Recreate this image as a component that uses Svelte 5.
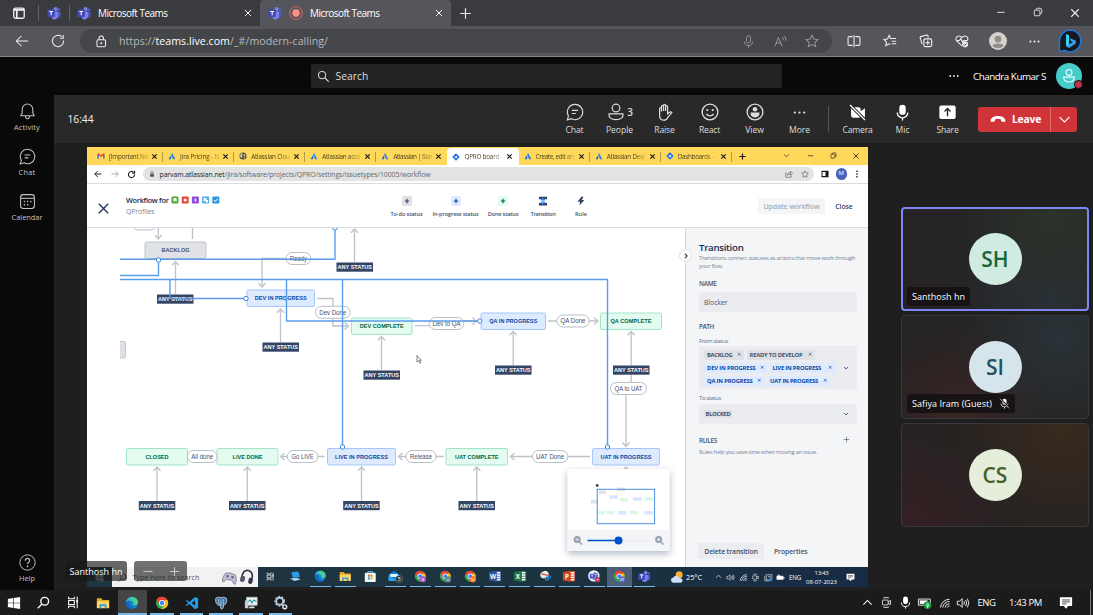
<script>
  function fit(node, width) {
    const natural = node.getBoundingClientRect().width;
    const count = node.textContent.length;
    if (width && count) {
      node.style.letterSpacing = (width - natural) / count + 'px';
    }
  }

  const teamsLogo = `<circle cx="9.8" cy="3.4" r="2.4" fill="#7b83eb"/><circle cx="13.6" cy="4.2" r="1.6" fill="#5059c9"/><path d="M11 6.5h4.5v4.2a2.6 2.6 0 0 1-4.5 1.8z" fill="#5059c9"/><path d="M5.5 6.3h7v5a4 4 0 0 1-7 2.8z" fill="#7b83eb"/><rect x="0.5" y="4" width="8.5" height="8.5" rx="1" fill="#4349b8"/><path d="M2.6 6.2h4.3M4.75 6.2v4.5" stroke="#fff" stroke-width="1.2"/>`;
  const chromeLogo = `<circle cx="8" cy="8" r="7" fill="#34a853"/><path d="M8 8 1.9 4.5A7 7 0 0 1 14.1 4.5z" fill="#ea4335"/><path d="M8 1a7 7 0 0 0-6.1 3.5L5.2 10 8 5z" fill="#ea4335"/><path d="M14.1 4.5A7 7 0 0 1 7.6 15L11 9V4.5z" fill="#fbbc05"/><circle cx="8" cy="8" r="3.5" fill="#fff"/><circle cx="8" cy="8" r="2.6" fill="#4285f4"/>`;
  const edgeLogo = `<circle cx="8" cy="8" r="7" fill="#1683d8"/><path d="M1.2 7C2 3 5 1 8.3 1 12.5 1 15 4 15 7c0 2.4-1.8 3.5-3.6 3.5-1.5 0-2.4-.5-2-1.2C10.200 7.500 8.500 5.500 6 5.500 3.800 5.500 2 6.200 1.200 7z" fill="#45cf93"/><path d="M1.200 7C2 3 5 1 8.300 1c-3 1-2 3.500-2.300 4.500C3.800 5.500 2 6.200 1.200 7z" fill="#2fb5dd"/><path d="M6 5.500C3.800 8 5.500 12.500 11 13.800 8 15.800 4 15 2.200 12 .8 9.700.7 8 1.200 7 2.400 5.600 4.500 5.300 6 5.500z" fill="#1068bd"/>`;
  const folder = `<path d="M1 2.500h5l1.500 2H15v9H1z" fill="#e9a820"/><path d="M1 6h14v8H1z" fill="#ffd766"/><path d="M4 14v-4.500h8V14h-2v-2.500H6V14z" fill="#3d9be0"/>`;
  const atlas = `<path d="M5.200 7C3.800 9.500 2.500 12 1.300 14.500h4.300C7 11.500 6.800 9 5.200 7z" fill="#1868db"/><path d="M8 1.300C6 4.800 6.600 7 7.800 9.500l2.500 5h4.300z" fill="#2680f5"/>`;
  const jira = `<path d="M8 .5 15.500 8 8 15.500.5 8z" fill="#2474e8"/><path d="M8 5.200 10.800 8 8 10.800 5.200 8z" fill="#fff"/><path d="M8 .5v4.700L5 8" fill="#0b56c4"/>`;
  const office = (c, l) => `<rect x="7" y="2" width="8" height="12" fill="#fff" stroke="${c}"/><path d="M9 5h5M9 8h5M9 11h5" stroke="${c}"/><path d="M0 2.500 10 1v14L0 13.500z" fill="${c}"/><text x="5" y="11" font-family="Open Sans, sans-serif" font-weight="700" font-size="8" text-anchor="middle" fill="#fff">${l}</text>`;
  const badge = (c, l) => chromeLogo + `<circle cx="11.500" cy="12" r="3.900" fill="${c}"/><text x="11.500" y="14" text-anchor="middle" font-size="5.500" font-family="Open Sans, sans-serif" fill="#fff">${l}</text>`;
  const S = 'fill="none" stroke="currentColor"';
  const meet = `<rect x="3" y="5" width="7" height="6" rx="1" ${S}/><path d="m10 7 3-1.500v5L10 9M4 2.500q3.500-1.500 7 0M4 13.500q3.500 1.500 7 0" ${S}/>`;
  const wifi = `<path d="M2 14A12 12 0 0 1 14 3M5 14a9 9 0 0 1 9-8M8 14a6 6 0 0 1 6-5M11 14a3 3 0 0 1 3-2" ${S} stroke-width="1.200"/>`;
  const speaker = `<path d="M1.500 6h2.500l3-3v10l-3-3H1.500z" ${S}/><path d="M9 6q1.200 2 0 4M11 4.500q2.200 3.500 0 7M13 3q3.300 5 0 10" ${S}/>`;

  const icons = {
    teams: teamsLogo, chrome: chromeLogo, edge: edgeLogo, folder, atlas, jira, meet, wifi, speaker,
    panel: `<rect x="2" y="2.500" width="12" height="11.500" rx="2" ${S} stroke-width="1.500"/><path d="M2 4.500h12M5.500 5v9" ${S} stroke-width="2"/>`,
    x: `<path d="m3 3 10 10M13 3 3 13" ${S} stroke-width="1.500"/>`,
    xBold: `<path d="m3 3 10 10M13 3 3 13" ${S} stroke-width="2.400"/>`,
    plus: `<path d="M8 1.500v13M1.500 8h13" ${S} stroke-width="1.400"/>`,
    plusBold: `<path d="M8 1v14M1 8h14" ${S} stroke-width="2.600"/>`,
    rec: `<circle cx="8" cy="8" r="7.200" fill="none" stroke="#f0645f"/><circle cx="8" cy="8" r="4.200" fill="#ff8f88"/>`,
    min: `<path d="M2 8.500h12" ${S} stroke-width="1.400"/>`,
    restore: `<rect x="2" y="5" width="9" height="9" rx="1.500" ${S} stroke-width="1.400"/><path d="M5 4.500Q5 2 7 2h4q3 0 3 3v4q0 2-2.500 2" ${S} stroke-width="1.400"/>`,
    back: `<path d="M15 8H1.500M7.500 2l-6 6 6 6" ${S} stroke-width="1.200"/>`,
    backBold: `<path d="M15 8H1.500M7.500 2l-6 6 6 6" ${S} stroke-width="2"/>`,
    fwd: `<path d="M1 8h13.500M9 2.500 14.500 8 9 13.500" ${S} stroke-width="1.600"/>`,
    reload: `<path d="M14.500 7.500A6.500 6.500 0 1 1 12.200 3M14 1v3.800h-3.800" ${S} stroke-width="1.200"/>`,
    reloadBold: `<path d="M13.500 8A5.500 5.500 0 1 1 11.500 3.800M13.500 1.500v4h-4" ${S} stroke-width="2"/>`,
    lock: `<rect x="2.500" y="6" width="11" height="9" rx="1.500" ${S} stroke-width="1.300"/><path d="M5.200 6V4a2.800 2.800 0 0 1 5.600 0v2" ${S} stroke-width="1.300"/><circle cx="8" cy="10.500" r="1.200" fill="currentColor"/>`,
    lockFill: `<rect x="3" y="7" width="10" height="8" rx="1" fill="currentColor"/><path d="M5 7V4.500a3 3 0 0 1 6 0V7" ${S} stroke-width="1.800"/>`,
    mic: `<rect x="5.500" y="1" width="5" height="9" rx="2.500" ${S} stroke-width="1.200"/><path d="M3 8a5 5 0 0 0 10 0M8 13v2.500" ${S} stroke-width="1.200"/>`,
    read: `<path d="M1 14 5.500 3 10 14M2.700 10h5.600M10 2.500q2 1.500 1.500 4M12.300 1q3 2 2.200 6" ${S} stroke-width="1.200"/>`,
    star: `<path d="m8 1.500 2 4.300 4.700.6-3.400 3.300.9 4.700L8 12.100l-4.200 2.300.9-4.700L1.300 6.400 6 5.800z" ${S} stroke-width="1.200"/>`,
    split: `<path d="M6.500 3H2.500Q1.200 3 1.200 4.300v7.400Q1.200 13 2.500 13h4M9.500 3h4q1.300 0 1.300 1.300v7.400q0 1.300-1.300 1.300h-4M8 1v14" ${S} stroke-width="1.200"/>`,
    fav: `<path d="M8.500 12 7 11.300l-3.800 2.200.8-4.200L1 6.200l4.200-.6L7 1.500l1.700 3.700H15M10 8.200h5M10 11.200h5" ${S} stroke-width="1.200"/>`,
    collect: `<rect x="5.500" y="5.500" width="9" height="9" rx="1.800" ${S} stroke-width="1.300"/><path d="M10 7.500v5M7.500 10h5M3.500 11.500 1.300 4.300q-.3-1 .7-1.300l6.800-1.800q1-.2 1.300.8l.6 2" ${S} stroke-width="1.200"/>`,
    heart: `<path d="M8 13.500 2 8C0 5.500 1.300 2.500 4.200 2.200 6 2 7.200 3 8 4.200 8.800 3 10 2 11.800 2.200c2.900.3 3.700 3.300 2.200 5.300M1.500 7.500H5l1.500-2 2 3.500 1.500-1.500h4" ${S} stroke-width="1.200"/><circle cx="11.500" cy="11.800" r="3.500" fill="#eee"/><path d="m9.800 11.800 1.300 1.300 2.200-2.500" fill="none" stroke="#444"/>`,
    avatar: `<circle cx="8" cy="8" r="8" fill="#d6d2cf"/><circle cx="8" cy="6.300" r="3" fill="#938c87"/><path d="M3 12.500Q3.200 10.200 8 10.200t5 2.300Q8 16.500 3 12.500z" fill="#938c87"/>`,
    dots: `<circle cx="3" cy="8" r="1.200" fill="currentColor"/><circle cx="8" cy="8" r="1.200" fill="currentColor"/><circle cx="13" cy="8" r="1.200" fill="currentColor"/>`,
    bing: `<path d="M8 .8A7.200 7.200 0 1 1 4.500 14.300L1 15V8A7.200 7.200 0 0 1 8 .8z" fill="#17191f" stroke="#1b78e8" stroke-width=".9"/><path d="M5.500 3.500 7.300 4.200v6L10 8.800 8.500 8l-.7-1.800 4 1.500v2L7.300 12.700 5.500 11.500z" fill="#3ba1f7"/><path d="m5.500 3.500 1.800.7v6l-1.800 1.300z" fill="#2ce0f2"/>`,
    search: `<circle cx="6.500" cy="6.500" r="4.800" ${S} stroke-width="1.200"/><path d="m10 10 5 5" ${S} stroke-width="1.300"/>`,
    searchBold: `<circle cx="9.500" cy="6.500" r="4.800" ${S} stroke-width="1.700"/><path d="m6 10-5 5" ${S} stroke-width="1.700"/>`,
    person: `<circle cx="8" cy="8" r="8" fill="#46cdc9"/><circle cx="8" cy="5.800" r="1.800" fill="none" stroke="#e8ffff" stroke-width=".7"/><path d="M4.700 8.700h6.600v.6q-.7 2.400-3.300 2.400T4.700 9.300z" fill="none" stroke="#e8ffff" stroke-width=".7"/>`,
    bell: `<path d="M8 1a5 5 0 0 1 5 5v3.500l1.300 2.500H1.700L3 9.500V6a5 5 0 0 1 5-5zM6 12.500q.3 2.300 2 2.300t2-2.300" ${S}/>`,
    chat: `<path d="M8 1.200a6.800 6.800 0 1 1-3.300 12.700L1.200 15l1-3.500A6.800 6.800 0 0 1 8 1.200zM5.300 6.500h5.400M5.300 9.300h3.500" ${S}/>`,
    calendar: `<rect x="1.500" y="1.500" width="13" height="13" rx="2.500" ${S}/><path d="M1.500 5h13" ${S}/><path d="M4.500 8h1.200M7.500 8h1.200M10.500 8h1.200M4.500 11h1.200M7.500 11h1.200" ${S} stroke-width="1.400"/>`,
    help: `<circle cx="8" cy="8" r="7.200" ${S} stroke-width=".9"/><path d="M5.900 6.300q.1-2.200 2.100-2.200t2.100 2q0 1.200-1.200 1.900-.9.600-.9 1.600" ${S}/><circle cx="8" cy="11.700" r=".8" fill="currentColor"/>`,
    people: `<circle cx="8" cy="4.500" r="3.400" ${S} stroke-width="1.100"/><path d="M1.800 9.700h12.400q.5 5-6.200 5t-6.200-5z" ${S} stroke-width="1.100"/>`,
    hand: `<path d="M3.200 9V5q0-1 .8-1t.9 1V7.500V3q0-1 .9-1t.9 1V7V2.300q0-1 .9-1t.9 1V7V3.200q0-.9.900-.9t.9.900v6.300l2-1.400q1.100-.6 1.800.4l-3.600 4.300Q9.300 15.300 7.200 15.300q-4 0-4-4.300z" ${S} stroke-width="1.100"/>`,
    smile: `<circle cx="8" cy="8" r="7" ${S} stroke-width="1.200"/><circle cx="5.600" cy="6.300" r="1" fill="currentColor"/><circle cx="10.400" cy="6.300" r="1" fill="currentColor"/><path d="M4.700 9.800q3.300 3.300 6.600 0" ${S} stroke-width="1.200"/>`,
    view: `<circle cx="8" cy="8" r="7" ${S} stroke-width="1.200"/><circle cx="8" cy="5.500" r="2" fill="currentColor"/><path d="M4 8.500h8q0 4.300-4 4.300t-4-4.300z" fill="currentColor"/>`,
    camera: `<path d="M2 3h7q2 0 2 2v1.800l4-2.800v9l-4-2.800V11q0 2-2 2H4q-2 0-2-2z" fill="currentColor"/><path d="m1 1 14 14" stroke="#292929" stroke-width="3"/><path d="m1 1 14 14" ${S} stroke-width="1.200"/>`,
    micFill: `<rect x="5" y=".7" width="6" height="9.500" rx="3" fill="currentColor"/><path d="M3 8a5 5 0 0 0 10 0M8 13v2.500" ${S} stroke-width="1.200"/>`,
    micOff: `<rect x="5" y="1" width="6" height="9" rx="3" fill="currentColor"/><path d="M3 8a5 5 0 0 0 10 0M8 13v2.500" ${S}/><path d="m2 1 13 14" stroke="#171010" stroke-width="2.500"/><path d="m1.500 1 13 14" ${S}/>`,
    share: `<rect x=".3" y="1.500" width="15.400" height="12.500" rx="1.800" fill="currentColor"/><path d="M8 11.500V4.500M5.200 7 8 4.300 10.800 7" fill="none" stroke="#292929" stroke-width="1.300"/>`,
    phone: `<path d="M.6 9.200C1.500 3.500 14.500 3.500 15.400 9.200q.2 2-1.300 1.800l-2.400-.6Q10.800 10 10.800 8.300 8 7.200 5.200 8.300q0 1.700-.9 2.100L1.900 11Q.4 11.200.6 9.200z" fill="currentColor"/>`,
    down: `<path d="m2 5 6 6 6-6" ${S} stroke-width="1.400"/>`,
    downBold: `<path d="m3 5.500 5 5 5-5" ${S} stroke-width="2.600"/>`,
    up: `<path d="m2 11 6-6 6 6" ${S} stroke-width="1.500"/>`,
    gmail: `<path d="M1 3v10h3V7l4 3 4-3v6h3V3l-2-.5L8 6.500 3 2.500z" fill="#ea4335"/><path d="M1 5v8h3V7z" fill="#4285f4"/><path d="M15 5v8h-3V7z" fill="#34a853"/>`,
    globe: `<circle cx="8" cy="8" r="7" fill="#4a4b4d"/><path d="M4 3q4-.5 4 2L5 7l2 2-1 3-4-3zM10 4l3 2-1 3-3-1zM9 11l3-1-2 4z" fill="#f6dc85"/>`,
    shareUp: `<path d="M4 6H1.500v8.500h11V11M4.500 10.500Q5 5.500 11 5.500V2.500l4 4-4 4V8Q7 7.500 4.500 10.500z" ${S} stroke-width="1.200"/>`,
    sidebar: `<path d="M1 1.500h14v13H1z" fill="#171717"/><path d="M3 4h6v8H3z" fill="#fff"/>`,
    kebab: `<circle cx="8" cy="2.500" r="1.700" fill="currentColor"/><circle cx="8" cy="8" r="1.700" fill="currentColor"/><circle cx="8" cy="13.500" r="1.700" fill="currentColor"/>`,
    addGrey: `<rect width="16" height="16" rx="2" fill="#dfe1e6"/><path d="M8 4.500v7M4.500 8h7" stroke="#344563" stroke-width="1.900"/>`,
    addBlue: `<rect width="16" height="16" rx="2" fill="#deebff"/><path d="M8 4.500v7M4.500 8h7" stroke="#0747a6" stroke-width="1.900"/>`,
    addGreen: `<rect width="16" height="16" rx="2" fill="#e3fcef"/><path d="M8 4.500v7M4.500 8h7" stroke="#006644" stroke-width="1.900"/>`,
    transition: `<path d="M1.500 1h13v4h-13zM1.500 11h13v4h-13z" fill="#344563"/><path d="M8 4v8M4.500 7 8 4l3.500 3M4.500 10 8 12.500l3.500-2.500" fill="none" stroke="#2684ff" stroke-width="1.800"/>`,
    bolt: `<path d="M8.500 1 2.500 9h4L5.500 15 13.500 6.500H9.300L12 1z" fill="#344563"/>`,
    win: `<path d="M1 3.300 7 2.400v5.200H1zM7.700 2.300 15 1.200v6.400H7.700zM1 8.300h6v5.300l-6-.9zM7.700 8.300H15v6.500l-7.300-1.100z" fill="currentColor"/>`,
    task: `<path d="M2 1v2.500h7V1M2 15v-2.500h7V15M2 5.500h7v5H2zM12.500 1v14" ${S} stroke-width="1.300"/><path d="M11.500 5h2v3h-2z" fill="currentColor"/>`,
    code: `<path d="M11.500 1 15 2.700v10.600L11.500 15 5 9.200 2 11.500.8 10.800 3.700 8 .8 5.200 2 4.500l3 2.300zM11.500 5 7.600 8l3.900 3z" fill="#239be8"/>`,
    pg: `<path d="M2 2.500Q5 .5 8 2q3-1.500 6 .5 2 4-1.500 7.500L11 9.500Q11 15 9 15T7.300 10L5 11Q.5 7 2 2.500z" fill="#41709c" stroke="#c8d9e7" stroke-width=".9"/><path d="M5.500 3.500q-1 3 .5 6M10.500 3.500q1.200 3-.3 6M8 4v7" fill="none" stroke="#d5e2ec" stroke-width=".8"/>`,
    monitor: `<path d="M3 1.500h12v9H3z" fill="#eff6f8" stroke="#bbc3c9"/><path d="M4.500 6.500 7 4.500 9 8l2-3.500 3 2" fill="none" stroke="#158fa8" stroke-width="1.200"/><path d="M1 5h4v9H1z" fill="#c8cdd0"/><path d="M7 12h5v2H5z" fill="#dadedf"/>`,
    gears: `<circle cx="6.500" cy="6" r="4" fill="none" stroke="#b9d1e4" stroke-width="2.200"/><circle cx="6.500" cy="6" r="5.600" fill="none" stroke="#b9d1e4" stroke-width="1.200" stroke-dasharray="2 2"/><circle cx="12.300" cy="12.300" r="2.200" fill="none" stroke="#dce9f2" stroke-width="1.600"/>`,
    device: `<path d="m3 3 9-1 2 7-9 1z" fill="#2f9ae6"/><path d="m1 11 9-1 5 2-8 2z" fill="#a5d1ee"/>`,
    store: `<path d="M5 4V2h6v2" fill="none" stroke="#60c0e8" stroke-width="1.200"/><rect x="1" y="3.500" width="14" height="12" rx="1.500" fill="#f6f9fb"/><path d="M5 6h2.600v2.600H5z" fill="#f25022"/><path d="M8.400 6H11v2.600H8.400z" fill="#7fba00"/><path d="M5 9.400h2.600V12H5z" fill="#00a4ef"/><path d="M8.400 9.400H11V12H8.400z" fill="#ffb900"/>`,
    mail: `<path d="m-.5 6 7-5.500L13.500 6v8H-.5z" fill="#0c74cf"/><path d="M1.500 5h10v4h-10z" fill="#e8f4fc"/><path d="m-.5 6 7 5.500 7-5.500v8H-.5z" fill="#28a8ea"/><circle cx="13" cy="11.500" r="4.600" fill="#24323a" stroke="#aaa" stroke-width=".5"/><text x="13" y="14.200" font-family="Open Sans, sans-serif" font-size="7.500" text-anchor="middle" fill="#fff">5</text>`,
    chromeB: badge('#a950c9', 'B'), chromeS: badge('#6b8697', 's'), chromeM: badge('#ff6a2b', 'M'), chromeP: badge('#5968c4', 'M'),
    word: office('#2b579a', 'W'), excel: office('#217346', 'X'), ppt: office('#d24726', 'P'),
    snip: `<ellipse cx="7" cy="6" rx="5.500" ry="4.500" fill="#ece8e8" transform="rotate(-25 7 6)"/><path d="m3 5 9 2" stroke="#cf3c45" stroke-width="1.500"/><circle cx="10" cy="11" r="2" fill="none" stroke="#2f9bea" stroke-width="1.400"/><circle cx="13.500" cy="9" r="1.500" fill="none" stroke="#2f9bea"/>`,
    teamsBusy: `<circle cx="7.500" cy="7.500" r="7.300" fill="#f4f4fb"/><g transform="translate(2 2) scale(.7)">${teamsLogo}</g><circle cx="12.500" cy="12.500" r="3.300" fill="#c4314b"/><path d="M11 12.500h3" stroke="#fff"/>`,
    weather: `<circle cx="10.500" cy="5.500" r="4" fill="#ffb02e"/><path d="M3.500 14.500A3 3 0 0 1 3.700 8.600 4 4 0 0 1 11 9.500a2.600 2.600 0 0 1 1.500 5z" fill="#cfe0fa"/>`,
    battery: `<path d="M1 5h12v7H1z" fill="currentColor"/><path d="M13 7h2v3h-2zM3 3h4v2H3z" fill="currentColor"/>`,
    batteryOk: `<path d="M.5 3.500h13.500v7H.5z" ${S}/><path d="M2 5h9v4H2z" fill="currentColor"/><circle cx="11" cy="10.500" r="4.300" fill="#15943c"/><path d="M11 8q3 2.500 0 5-3-2.500 0-5zM11 10v4" fill="none" stroke="#d9ffe2" stroke-width=".9"/>`,
    note: `<path d="M1 1.500h14v10h-4.500L8 14.500l-2.500-3H1z" fill="currentColor"/><path d="M3.500 4.500h9M3.500 6.700h9M3.500 9h5" stroke="#222" stroke-width=".9"/>`,
    sync: `<path d="M4 3h10v9H4z" ${S}/><path d="M1.500 5v9H9M7 6h4v3" ${S}/><circle cx="11.500" cy="12" r="3" fill="#1d89e4"/>`,
    pad: `<g transform="rotate(12 8 8)"><path d="M3 5q5-2 10 0 3 5 1.500 9-1.500 1-3.500-3H5q-2 4-3.500 3Q0 10 3 5z" fill="#c4bfd4" stroke="#77718f" stroke-width=".7"/><circle cx="5.500" cy="7.800" r="1.300" fill="#655f7d"/><circle cx="10.500" cy="7.800" r="1.300" fill="#655f7d"/></g>`,
    phones: `<g transform="rotate(14 8 8)"><path d="M2.500 11Q1 2 7.500 1.500 14 2 13 11" fill="none" stroke="#36354a" stroke-width="1.800"/><rect x="1" y="8.500" width="5" height="6.500" rx="2" fill="#55546c"/><rect x="10" y="8.500" width="4.500" height="6.500" rx="2" fill="#36354a"/></g>`
  };

  const chromeTabs = [
    ['gmail', '[Important No', 39], ['atlas', 'Jira Pricing - N', 39], ['globe', 'Atlassian Clou', 38.5], ['atlas', 'Atlassian acco', 38], ['atlas', 'Atlassian | Star', 39],
    ['jira', 'QPRO board -', 38], ['atlas', 'Create, edit an', 38], ['atlas', 'Atlassian Dev(', 38], ['jira', 'Dashboards -', 36]
  ];
  const callButtons = [['chat', 'Chat', 18], ['people', 'People', 27], ['hand', 'Raise', 20.500], ['smile', 'React', 21], ['view', 'View', 18.500], ['dots', 'More', 21]];
  const mediaButtons = [['camera', 'Camera', 30], ['micFill', 'Mic', 14], ['share', 'Share', 22]];
  const rail = [['bell', 'Activity', 26], ['chat', 'Chat', 17], ['calendar', 'Calendar', 31]];
  const innerTasks = [['task', 0], ['device', 0], ['edge', 1], ['folder', 1], ['store', 0], ['mail', 1], ['chromeB', 1], ['chromeS', 1], ['chromeM', 1], ['word', 1], ['excel', 1], ['snip', 1], ['ppt', 1], ['teamsBusy', 1], ['chromeP', 2], ['teams', 1]];
  const tasks = [['win', 0], ['searchBold', 0], ['task', 0], ['folder', 0], ['edge', 2], ['chrome', 1], ['code', 1], ['pg', 1], ['monitor', 1], ['gears', 1]];
  const jiraTools = [['addGrey', 'To-do status', 32, 49], ['addBlue', 'In-progress status', 46, 49], ['addGreen', 'Done status', 30.500, 46], ['transition', 'Transition', 25, 34], ['bolt', 'Rule', 12, 42]];

  const nodes = [
    ['BACKLOG', 145, 242, 61, 'grey', 28], ['DEV IN PROGRESS', 247, 290, 67.500, 'blue', 52], ['DEV COMPLETE', 351.500, 318, 60.500, 'green', 44],
    ['QA IN PROGRESS', 481, 313, 64.500, 'blue', 48], ['QA COMPLETE', 600.500, 313, 61, 'green', 41], ['CLOSED', 126.500, 448.500, 61, 'green', 23],
    ['LIVE DONE', 217, 448.500, 61, 'green', 30], ['LIVE IN PROGRESS', 327.500, 448.500, 68, 'blue', 53], ['UAT COMPLETE', 446, 448.500, 61.500, 'green', 43.500], ['UAT IN PROGRESS', 592.500, 448.500, 67, 'blue', 51]
  ];
  const anys = [[336.500, 262.500], [157, 294.500], [262.500, 342.500], [363.500, 370.500], [495, 365.500], [613, 365.500], [138.800, 501], [229, 501], [343.200, 501], [458.500, 501]];
  const arrows = [[354.500, 262, 229], [175.500, 294, 261.500], [280.500, 342, 309], [381.500, 370, 336.500], [513.200, 365, 331.500], [631.200, 365, 331.500], [157, 501, 467], [247.300, 501, 467], [361.500, 501, 467], [476.800, 501, 467]];
  const pills = [['Ready', 286, 252.500, 24.700, 17], ['Dev Done', 315.500, 306.300, 34.500, 27], ['Dev to QA', 429.300, 317.500, 34.500, 28], ['QA Done', 556.800, 315, 32.400, 25], ['QA to UAT', 610.500, 382.500, 36, 28], ['All done', 187.500, 450.500, 29.500, 22], ['Go LIVE', 287.300, 450.500, 30.500, 22], ['Release', 406, 450.500, 30, 22], ['UAT Done', 532.300, 450.500, 35.500, 28]];
  const dots = [[335, 228], [158.500, 260], [246, 298.500], [342.500, 447], [479.800, 321], [607.500, 447]];
  const mini = [[599, 490.500, 7, 0], [617, 487.500, 8, 0], [591, 500, 7, 0], [609.500, 495.300, 8.500, 1], [620, 498, 8, 2], [633, 497.200, 8.500, 1], [645, 497.200, 8.500, 2], [598, 511, 7, 2], [606.500, 511, 8, 2], [618, 511, 8.500, 1], [629.500, 511, 8.500, 2], [644.500, 511, 8.500, 1]];
  const tint = ['#dfe1e6', '#d8e6ff', '#d9f7e7'];
  const tagRows = [
    [['BACKLOG', 25.500, 40, 'g'], ['READY TO DEVELOP', 53, 68.500, 'g']],
    [['DEV IN PROGRESS', 48.500, 63, 'b'], ['LIVE IN PROGRESS', 48.500, 66, 'b']],
    [['QA IN PROGRESS', 45.500, 60.500, 'b'], ['UAT IN PROGRESS', 48, 63, 'b']]
  ];
</script>

{#snippet ic(name, size)}
  <svg class="ic" width={size} height={size} viewBox="0 0 16 16">{@html icons[name]}</svg>
{/snippet}

{#snippet tx(text, width, cls)}
  <span class="tx {cls}" use:fit={width}>{text}</span>
{/snippet}

<div class="desktop">
  <div class="edge-tabs">
    <div class="pin first">{@render ic('panel', 14)}</div>
    <div class="pin">{@render ic('teams', 14)}</div>
    <div class="etab">{@render ic('teams', 14)}{@render tx('Microsoft Teams', 69.500, 'tabname')}<span class="close">{@render ic('x', 10)}</span></div>
    <div class="etab active">{@render ic('teams', 14)}<span class="rec">{@render ic('rec', 14)}</span>{@render tx('Microsoft Teams', 69.500, 'tabname')}<span class="close">{@render ic('x', 10)}</span></div>
    <div class="newtab">{@render ic('plus', 13)}</div>
    <div class="winctl"><span>{@render ic('min', 10)}</span><span>{@render ic('restore', 10)}</span><span>{@render ic('x', 12)}</span></div>
  </div>

  <div class="edge-bar">
    <span class="nav">{@render ic('back', 14)}</span><span class="nav">{@render ic('reload', 14)}</span>
    <div class="address">
      <span class="lock">{@render ic('lock', 12.500)}</span>
      <span class="tx url" use:fit={209}>https://<b>teams.live.com</b>/_#/modern-calling/</span>
      <span class="slot32 push">{@render ic('mic', 13)}</span><span class="slot32">{@render ic('read', 13)}</span><span class="slot32">{@render ic('star', 14)}</span>
    </div>
    <div class="exts">
      {#each [['split', 14], ['fav', 14], ['collect', 14], ['heart', 14], ['avatar', 18], ['dots', 13], ['bing', 24]] as [n, s]}<span>{@render ic(n, s)}</span>{/each}
    </div>
  </div>

  <div class="teams-head">
    <div class="search">{@render ic('search', 12.500)}{@render tx('Search', 33, 'searchtext')}</div>
    <div class="me"><span class="more">{@render ic('dots', 12)}</span>{@render tx('Chandra Kumar S', 73, 'myname')}<span class="mypic">{@render ic('person', 26)}<i></i></span></div>
  </div>

  <div class="teams">
    <nav>
      {#each rail as [n, l, w]}<div class="railitem">{@render ic(n, 17)}{@render tx(l, w, 'raillabel')}</div>{/each}
      <div class="railitem helpitem">{@render ic('help', 17)}{@render tx('Help', 16, 'raillabel')}</div>
    </nav>
    <main>
      <div class="callbar">
        {@render tx('16:44', 26, 'clock')}
        <div class="calls">
          {#each callButtons as [n, l, w]}
            <div class="call" class:count={n === 'people'}><span class="cicon">{@render ic(n, n === 'dots' ? 15 : 18)}{#if n === 'people'}<em>3</em>{/if}</span>{@render tx(l, w, 'calllabel')}</div>
          {/each}
          <i class="divider"></i>
          {#each mediaButtons as [n, l, w]}<div class="call white"><span class="cicon">{@render ic(n, 17)}</span>{@render tx(l, w, 'calllabel')}</div>{/each}
          <div class="leave"><div class="leave-main">{@render ic('phone', 16)}{@render tx('Leave', 29, 'leavetext')}</div><div class="leave-more">{@render ic('down', 13)}</div></div>
        </div>
      </div>

      <div class="stage">
        <section class="shared">
          <div class="ctabs">
            {#each chromeTabs as [n, l, w], i}
              <div class="ctab" class:on={i === 5} class:nosep={i === 4}>{@render ic(n, 8)}<span class="cwrap">{@render tx(l, w, 'clabel')}</span>{@render ic('xBold', 7)}</div>
            {/each}
            <span class="cplus">{@render ic('plusBold', 7)}</span>
            <div class="cwin"><span>{@render ic('down', 7)}</span><span>{@render ic('min', 7)}</span><span>{@render ic('restore', 7)}</span><span>{@render ic('x', 8)}</span></div>
          </div>
          <div class="cbar">
            <span class="cnav">{@render ic('backBold', 8)}</span><span class="cnav dim">{@render ic('fwd', 8)}</span><span class="cnav">{@render ic('reloadBold', 9)}</span>
            <div class="curl">{@render ic('lockFill', 6)}<span class="tx cadr" use:fit={271}><b>parvam.atlassian.net</b>/jira/software/projects/QPRO/settings/issuetypes/10005/workflow</span>
              <span class="cshare">{@render ic('shareUp', 8)}</span><span class="cstar">{@render ic('star', 8)}</span></div>
            <span class="cext">{@render ic('sidebar', 8)}</span><span class="cprofile">M</span><span class="ckebab">{@render ic('kebab', 8)}</span>
          </div>

          <div class="whead">
            <span class="wclose">{@render ic('x', 15)}</span>
            <div class="wtitle">
              <div class="wrow">{@render tx('Workflow for', 42.500, 'wname')}
                <svg class="ic types" width="49" height="8" viewBox="0 0 49 8">
                  <rect x=".5" y=".5" width="7" height="7" rx="1" fill="#57a63a"/><path d="M2.500 2h3v4L4 4.800 2.500 6z" fill="#fff"/>
                  <rect x="10.700" y=".5" width="7" height="7" rx="1" fill="#e5493a"/><circle cx="14.200" cy="4" r="1.600" fill="#fff"/>
                  <rect x="20.900" y=".5" width="7" height="7" rx="1" fill="#904ee2"/><path d="m24.800 1.800-2 2.500h1.500L24 6.200l2-2.500h-1.500z" fill="#fff"/>
                  <rect x="31.100" y=".5" width="7" height="7" rx="1" fill="#4bade8"/><path d="M32.500 2h3v3h-3zM34.500 4H37v2.500h-2.500z" fill="#fff"/>
                  <rect x="41.300" y=".5" width="7" height="7" rx="1" fill="#2f94df"/><path d="m43 4 1.300 1.500L46.700 2.500" stroke="#fff" fill="none"/>
                </svg>
              </div>
              <div class="wrow sub">{@render tx('QProfiles', 28.500, 'wproj')}</div>
            </div>
            <div class="wtools">
              {#each jiraTools as [n, l, w, sl]}<div class="wtool" style:width="{sl}px">{@render ic(n, 10)}{@render tx(l, w, 'wlabel')}</div>{/each}
            </div>
            <div class="wupdate">{@render tx('Update workflow', 56, '')}</div>
            <div class="wcancel">{@render tx('Close', 17.500, '')}</div>
          </div>

          <div class="wbody">
            <svg class="canvas" width="598" height="339" viewBox="87 228 598 339">
              <defs>
                <clipPath id="area"><rect x="120" y="228" width="565" height="339"/></clipPath>
                <filter id="lift" x="-20%" y="-20%" width="140%" height="150%"><feDropShadow dx="0" dy="3" stdDeviation="3.500" flood-color="#091e42" flood-opacity=".3"/></filter>
              </defs>
              <g clip-path="url(#area)">
                <rect class="pill" x="133" y="219" width="23" height="11" rx="5"/>
                <g class="nodes">
                  {#each nodes as [l, x, y, w, c, tw]}
                    <rect class={c} {x} {y} width={w} height="16.500" rx="1.500"/>
                    <text class={c} x={x + w / 2} y={y + 10.200} textLength={tw} lengthAdjust="spacingAndGlyphs">{l}</text>
                  {/each}
                  <rect class="grey" x="114" y="341.500" width="11.500" height="16.500" rx="1.500"/>
                </g>
                <g class="wire">
                  <path d="M158.300 228v11m-3.500-4 3.500 4 3.500-4M192.500 228v11"/>
                  {#each arrows as [x, a, b]}<path d="M{x} {a}V{b}m-3.500 3.800 3.500-3.800 3.500 3.800"/>{/each}
                  <path d="M286 258.500h-24v28.500m-3.500-4 3.500 4 3.500-4"/>
                  <path d="M317 298.500h16v27.500h15.500m-4-3.500 4 3.500-4 3.500"/>
                  <path d="M415 325.700h15M464 321h12m-3.500-3.500 3.500 3.500-3.500 3.500"/>
                  <path d="M548 321h50m-4-3.500 4 3.500-4 3.500"/>
                  <path d="M631.200 374.500V383M626 394v52.500m-3.500-4 3.500 4 3.500-4M622.500 471l3.500-4 3.500 4"/>
                  <path d="M324.500 456.500H280.500m4-3.500-4 3.500 4 3.500M443.500 456.500H398.500m4-3.500-4 3.500 4 3.500M590 456.500H510.500m4-3.500-4 3.500 4 3.500"/>
                </g>
                {#each pills as [l, x, y, w, tw]}
                  <rect class="pill" {x} {y} width={w} height="12" rx="6"/>
                  <text class="pilltext" x={x + w / 2} y={y + 8.300} textLength={tw} lengthAdjust="spacingAndGlyphs">{l}</text>
                {/each}
                {#each anys as [x, y]}
                  <rect {x} {y} width="36.500" height="9.200" fill="#344563"/>
                  <text class="any" x={x + 18.250} y={y + 6.900} textLength="34.500" lengthAdjust="spacingAndGlyphs">ANY STATUS</text>
                {/each}
                <path class="blue-wire" d="M120 259.200H335V228M120 275.500H158.500V260M120 279.500H607.500V447M170 279.500V298.500H246M286.500 279.500V321H480M342.500 279.500V447"/>
                {#each dots as [x, y]}<circle class="joint" cx={x} cy={y} r="2.200"/>{/each}
              </g>
              <path d="M417 355.500v6.500l1.500-1.300 1.200 2.500 1-.5-1.100-2.400h1.700z" fill="#fff" stroke="#333" stroke-width=".6"/>
              <g filter="url(#lift)"><rect x="567.700" y="469" width="101.800" height="82" rx="1" fill="#fff"/></g>
              <rect x="567.700" y="530" width="101.800" height="21" fill="#f4f5f7"/>
              {#each mini as [x, y, w, c]}<rect {x} {y} width={w} height="3.500" fill={tint[c]}/>{/each}
              <circle cx="597.200" cy="485.500" r="1.400" fill="#344563"/>
              <rect x="597.200" y="489.300" width="57.400" height="34.400" fill="none" stroke="#4c8fe0"/>
              <g fill="#a5adba" stroke="#97a0af" stroke-width="1.400"><circle cx="577.200" cy="539.500" r="2.900"/><path d="m579.500 542 2.500 2.600"/><circle cx="658.700" cy="539.500" r="2.900"/><path d="m661 542 2.500 2.600"/></g>
              <path d="M575.700 539.500h3M657.200 539.500h3M658.700 538v3" stroke="#fff" stroke-width=".8"/>
              <path d="M618 540.500h32" stroke="#ebecf0" stroke-width="1.500"/><path d="M587.500 540.500H618" stroke="#0052cc" stroke-width="1.500"/><circle cx="618.500" cy="540.500" r="4" fill="#0052cc"/>
            </svg>
            <aside>
              <span class="collapse"><svg class="ic" width="6" height="6" viewBox="0 0 16 16"><path d="m5 2 6 6-6 6" fill="none" stroke="#344563" stroke-width="3"/></svg></span>
              {@render tx('Transition', 44.500, 'atitle')}
              <div class="adesc">{@render tx('Transitions connect statuses as actions that move work through', 156, '')}{@render tx('your flow.', 24, '')}</div>
              <div class="ahead name">{@render tx('NAME', 17.500, '')}</div>
              <div class="field">{@render tx('Blocker', 23.500, 'val')}</div>
              <div class="ahead path">{@render tx('PATH', 15, '')}</div>
              <div class="alab">{@render tx('From status', 29, '')}</div>
              <div class="field multi">
                <div class="tags">
                  {#each tagRows as row}<div class="tagrow">{#each row as [l, w, tw, c]}<span class="tag {c}" style:width="{tw}px">{@render tx(l, w, '')}{@render ic('xBold', 4.500)}</span>{/each}</div>{/each}
                </div>
                {@render ic('downBold', 6)}
              </div>
              <div class="alab to">{@render tx('To status', 22, '')}</div>
              <div class="field"><span class="tag n">{@render tx('BLOCKED', 25, '')}</span>{@render ic('downBold', 6)}</div>
              <div class="ahead rules">{@render tx('RULES', 18, '')}{@render ic('plus', 7)}</div>
              <div class="adesc help">{@render tx('Rules help you save time when moving an issue.', 118, '')}</div>
              <div class="abtns"><span class="del">{@render tx('Delete transition', 53.500, '')}</span><span class="prop">{@render tx('Properties', 33.500, '')}</span></div>
            </aside>
          </div>

          <div class="itask">
            <span class="iwin">{@render ic('win', 9)}</span>
            <div class="isearch">{@render ic('searchBold', 9)}{@render tx('Type here to search', 67, 'itype')}<span class="art">{@render ic('pad', 16)}{@render ic('phones', 15)}</span></div>
            {#each innerTasks as [n, st]}<span class="islot" class:run={st > 0} class:cur={st === 2}>{@render ic(n, n === 'task' ? 9 : 12.500)}</span>{/each}
            <div class="itray">
              <span class="iweather">{@render ic('weather', 14)}{@render tx('25°C', 16, '')}</span>
              <span class="istat">{#each ['up', 'speaker', 'wifi', 'meet', 'sync', 'battery'] as n}<i>{@render ic(n, n === 'up' ? 7 : 9)}</i>{/each}</span>
              {@render tx('ENG', 12, 'ieng')}
              <span class="itime">{@render tx('13:43', 14, '')}{@render tx('08-07-2023', 31, '')}</span>
              <span class="inote">{@render ic('note', 9)}</span>
            </div>
          </div>
        </section>

        <div class="tiles">
          <div class="tile speaking"><span class="face sh">SH</span><span class="who">{@render tx('Santhosh hn', 53, '')}</span></div>
          <div class="tile warm"><span class="face si">SI</span><span class="who">{@render tx('Safiya Iram (Guest)', 80, '')}{@render ic('micOff', 11)}</span></div>
          <div class="tile amber"><span class="face cs">CS</span></div>
        </div>
        <span class="presenter">{@render tx('Santhosh hn', 53, '')}</span>
        <div class="zoom">{@render ic('min', 12)}{@render ic('plus', 11)}</div>
      </div>
    </main>
  </div>

  <footer>
    <div class="slots">{#each tasks as [n, st]}<span class="slot" class:run={st > 0} class:cur={st === 2}>{@render ic(n, n === 'task' || n === 'searchBold' ? 13 : 14)}</span>{/each}</div>
    <div class="tray">
      <span style:width="20px">{@render ic('up', 11)}</span><span style:width="19px">{@render ic('meet', 13)}</span><span style:width="18px">{@render ic('micFill', 13)}</span><span style:width="21px">{@render ic('batteryOk', 14)}</span><span style:width="19px">{@render ic('wifi', 12)}</span><span style:width="18px">{@render ic('speaker', 14)}</span>
      <span style:width="29px">{@render tx('ENG', 18, '')}</span><span style:width="49px">{@render tx('1:43 PM', 33, '')}</span><span style:width="32px">{@render ic('note', 14)}</span><i></i>
    </div>
  </footer>
</div>

<style>
  :global(body) { overflow: hidden; background: #1f1f1f; }
  .desktop, .desktop * { box-sizing: border-box; }
  .desktop { width: 1093px; height: 615px; display: flex; flex-direction: column; font-family: "Open Sans", "Noto Sans", sans-serif; color: #eee; overflow: hidden; }
  .ic { display: block; flex: none; overflow: visible; }
  .tx { display: inline-block; white-space: nowrap; flex: none; }

  .edge-tabs { height: 26px; background: #3a3b3e; display: flex; align-items: center; flex: none; }
  .pin { width: 31px; height: 16px; display: flex; align-items: center; justify-content: center; border-right: 1px solid #626367; }
  .pin.first { width: 39px; }
  .etab { width: 190px; height: 26px; display: flex; align-items: center; padding: 0 7px; font-size: 10px; color: #fff; }
  .etab > :global(.tabname) { margin-left: 7px; }
  .etab.active { width: 191px; background: #55565b; border-radius: 4px 4px 0 0; padding-left: 8px; }
  .rec { margin-left: 7px; }
  .etab .close { margin-left: auto; }
  .newtab { margin-left: 8px; }
  .winctl { margin-left: auto; display: flex; }
  .winctl span { width: 36.700px; display: flex; justify-content: center; }

  .edge-bar { height: 31px; background: #55565b; border-bottom: 1px solid #85868a; display: flex; align-items: center; padding-left: 4px; flex: none; }
  .nav { width: 36px; display: flex; justify-content: center; }
  .address { height: 24px; width: 752px; margin-left: 4px; border-radius: 12px; background: #45464a; display: flex; align-items: center; padding: 0 4px 0 15px; }
  .url { margin-left: 11.500px; font-size: 10.600px; color: #b8b9bb; }
  .url b { font-weight: 400; color: #fff; }
  .slot32 { width: 32px; display: flex; justify-content: center; color: #96979a; }
  .push { margin-left: auto; }
  .exts { display: flex; padding-left: 4px; height: 30px; align-items: center; }
  .exts span { width: 36px; display: flex; justify-content: center; }

  .teams-head { height: 38px; background: #090909; display: flex; align-items: center; padding-left: 311px; flex: none; }
  .search { width: 471px; height: 24px; background: #232323; border-radius: 2px; display: flex; align-items: center; padding-left: 6px; }
  .searchtext { margin-left: 6px; font-size: 10.300px; color: #ddd; }
  .me { flex: 1; display: flex; align-items: center; justify-content: flex-end; padding-right: 11px; }
  .more { margin-right: 13px; }
  .myname { font-size: 9.800px; color: #fff; }
  .mypic { margin-left: 10px; position: relative; }
  .mypic i { position: absolute; right: -1px; bottom: 0; width: 9px; height: 9px; border-radius: 50%; background: #c4314b; border: 1px solid #090909; }

  .teams { flex: none; height: 495px; display: flex; }
  nav { width: 54px; background: #090909; display: flex; flex-direction: column; padding-top: 8px; }
  .railitem { height: 45px; display: flex; flex-direction: column; align-items: center; color: #c2c2c2; }
  .raillabel { font-size: 7.400px; line-height: 12px; margin-top: 1px; }
  .helpitem { margin-top: auto; height: 36px; }
  main { flex: 1; display: flex; flex-direction: column; background: #1f1f1f; }
  .callbar { height: 48px; background: #292929; display: flex; align-items: center; padding-left: 13.500px; flex: none; }
  .clock { font-size: 10.300px; }
  .calls { display: flex; margin-left: auto; align-items: center; padding-right: 16px; }
  .call { width: 45px; display: flex; flex-direction: column; align-items: center; color: #ddd; padding-top: 1px; }
  .call.white .cicon { color: #fff; }
  .cicon { height: 18px; display: flex; align-items: center; }
  .cicon em { font-style: normal; font-weight: 600; font-size: 10px; margin-left: 2px; }
  .count .cicon { margin-left: 1px; }
  .calllabel { font-size: 8.600px; line-height: 12px; margin-top: 3px; }
  .divider { width: 1px; height: 26px; background: #555; margin: 0 6px; }
  .leave { width: 99px; height: 25px; background: #d13438; border-radius: 3px; margin-left: 8px; display: flex; }
  .leave-main { width: 73px; border-right: 1px solid #df6b6e; display: flex; align-items: center; padding-left: 12px; gap: 6px; color: #fff; }
  .leavetext { font-size: 10.300px; font-weight: 700; }
  .leave-more { flex: 1; display: flex; align-items: center; justify-content: center; color: #fff; }

  .stage { flex: 1; position: relative; display: flex; padding: 4px 4px 0 33px; justify-content: space-between; background: #1f1f1f; }
  .shared { width: 781px; height: 440px; background: #fff; display: flex; flex-direction: column; color: #172b4d; }
  .ctabs { height: 18px; background: #ffd85a; display: flex; align-items: center; padding-left: 5px; color: #111; flex: none; }
  .ctab { width: 71.100px; height: 17px; display: flex; align-items: center; padding: 0 5px; font-size: 6.300px; position: relative; color: #111; }
  .ctab::after { content: ''; position: absolute; right: 0; top: 4px; width: 1px; height: 10px; background: #b29a4c; }
  .ctab.on::after, .ctab.nosep::after { display: none; }
  .ctab.on { background: #fff; border-radius: 4px 4px 0 0; height: 17px; margin-top: 1px; }
  .cwrap { margin-left: 4px; width: 42px; display: flex; flex: none; color: #4c4121; }
  .clabel { mask-image: linear-gradient(90deg, #000 70%, rgba(0, 0, 0, .3) 100%); }
  .cplus { margin-left: 7px; }
  .cwin { display: flex; margin-left: auto; }
  .cwin span { width: 23.200px; display: flex; justify-content: center; }
  .cbar { height: 19px; display: flex; align-items: center; border-bottom: 1px solid #dadce0; padding-left: 3px; color: #222; flex: none; }
  .cnav { width: 16.500px; display: flex; justify-content: center; }
  .dim { color: #999; }
  .curl { width: 671px; height: 14px; margin-left: 3px; border-radius: 7px; background: #e3e3e4; display: flex; align-items: center; padding: 0 5px 0 6px; color: #555; }
  .cadr { font-size: 6.900px; margin-left: 5px; color: #666; }
  .cadr b { font-weight: 400; color: #222; }
  .cshare { margin-left: auto; }
  .cstar { margin-left: 8px; }
  .cext { margin-left: 7px; }
  .cprofile { margin-left: 7px; width: 11.500px; height: 11.500px; border-radius: 50%; background: #4a62b8; color: #fff; font-size: 6px; line-height: 11.500px; text-align: center; }
  .ckebab { margin-left: 6px; }

  .whead { height: 44px; border-bottom: 1px solid #d9dce1; display: flex; align-items: center; padding: 0 9px 0 9px; flex: none; }
  .wclose { color: #253858; margin-top: 5px; }
  .wtitle { margin-left: 15px; width: 174px; margin-bottom: 1px; }
  .wrow { display: flex; align-items: center; height: 12px; }
  .wrow.sub { height: 11px; }
  .types { margin-left: 2px; }
  .wname { font-size: 7.300px; font-weight: 600; }
  .wproj { font-size: 6.800px; color: #7a869a; }
  .wtools { display: flex; margin-left: 82px; width: 301px; flex: none; margin-top: 4px; }
  .wtool { display: flex; flex-direction: column; align-items: center; gap: 2.500px; flex: none; }
  .wlabel { font-size: 5.600px; line-height: 10px; font-weight: 600; color: #42526e; }
  .wupdate { margin-left: auto; background: #f4f5f7; width: 67px; height: 16px; display: flex; align-items: center; justify-content: center; font-size: 7px; color: #a5adba; font-weight: 600; border-radius: 1px; margin-top: 1px; }
  .wcancel { width: 30px; margin-left: 4px; display: flex; justify-content: center; font-size: 6.800px; font-weight: 600; color: #344563; margin-top: 2px; }
  .wbody { height: 339px; display: flex; flex: none; }
  .canvas { display: block; flex: none; }
  .nodes text, .any { font-family: "Liberation Sans", Arial, sans-serif; font-weight: 700; font-size: 5.800px; text-anchor: middle; }
  rect.grey { fill: #dfe1e6; stroke: #bfc4ce; }
  rect.blue { fill: #deebff; stroke: #a5c6fa; }
  rect.green { fill: #e3fcef; stroke: #a0e5c9; }
  text.grey { fill: #42526e; }
  text.blue { fill: #0747a6; }
  text.green { fill: #006644; }
  .any { fill: #fff; font-size: 6px; }
  .wire path { fill: none; stroke: #bec2cb; stroke-width: 1.300; }
  .pill { fill: #fff; stroke: #b9bec8; }
  .pilltext { font-family: "Liberation Sans", Arial, sans-serif; font-size: 6.500px; text-anchor: middle; fill: #42526e; }
  .blue-wire { fill: none; stroke: #5b9cea; stroke-width: 1.400; }
  .joint { fill: #fff; stroke: #3c86e0; }

  aside { width: 183px; background: #f4f5f7; border-left: 1px solid #d5d8de; position: relative; padding: 13px 11px 0 13px; display: flex; flex-direction: column; align-items: stretch; }
  .collapse { position: absolute; left: -7px; top: 21px; width: 13px; height: 13px; border-radius: 50%; background: #fff; border: 1px solid #dcdfe5; display: flex; align-items: center; justify-content: center; }
  .atitle { font-size: 9.700px; font-weight: 600; line-height: 13px; align-self: flex-start; }
  .adesc { font-size: 5.900px; line-height: 8px; height: 16px; color: #7a869a; display: flex; flex-direction: column; align-items: flex-start; }
  .ahead { font-size: 6.400px; font-weight: 600; line-height: 10px; height: 10px; color: #42526e; display: flex; }
  .name { margin-top: 9px; margin-bottom: 3px; }
  .field { height: 20px; background: #ebecf0; display: flex; align-items: center; justify-content: space-between; padding: 0 8px 0 5px; border-radius: 1px; flex: none; color: #42526e; }
  .val { font-size: 6.700px; }
  .path { margin-top: 9.500px; }
  .alab { font-size: 5.900px; line-height: 10px; height: 10px; margin-top: 4px; margin-bottom: .5px; color: #5e6c84; display: flex; }
  .multi { height: 43px; }
  .tags { display: flex; flex-direction: column; gap: 3px; }
  .tagrow { display: flex; gap: 2.500px; }
  .tag { height: 10px; display: flex; align-items: center; justify-content: space-between; padding: 0 3px; font-size: 5.800px; font-weight: 700; border-radius: 1px; }
  .tag.g, .tag.n { background: #dfe1e6; color: #42526e; }
  .tag.b { background: #deebff; color: #0747a6; }
  .tag.n { height: 8px; padding: 0 1.500px; }
  .to { margin-top: 4px; margin-bottom: 1px; }
  .rules { margin-top: 11.500px; justify-content: space-between; padding-right: 7px; }
  .adesc.help { margin-top: 2px; }
  .abtns { display: flex; margin-top: auto; margin-bottom: 8px; margin-left: -1px; font-size: 6.900px; font-weight: 600; color: #42526e; align-items: center; }
  .del { width: 66px; height: 16px; background: #ebecf0; display: flex; align-items: center; justify-content: center; }
  .prop { margin-left: 10px; }

  .itask { height: 20px; background: linear-gradient(90deg, #203642, #1b3340 65%, #172b46); display: flex; align-items: stretch; color: #fff; }
  .iwin { width: 25px; display: flex; align-items: center; justify-content: center; color: #aaa; flex: none; }
  .isearch { width: 146px; background: #f2f2f2; display: flex; align-items: center; padding-left: 6px; color: #555; flex: none; }
  .itype { font-size: 7.200px; margin-left: 5.500px; }
  .art { display: flex; margin-left: auto; gap: 2px; padding-right: 3px; }
  .islot { width: 24.950px; flex: none; display: flex; align-items: center; justify-content: center; position: relative; padding-bottom: 1px; }
  .run::after { content: ''; position: absolute; left: 2px; right: 2px; bottom: 0; height: 1px; background: #76b9ed; }
  .cur { background: #4b6078; }
  .cur::after { left: 0; right: 0; }
  .itray { display: flex; align-items: center; padding-left: 13px; font-size: 7.400px; flex: 1; }
  .iweather { display: flex; align-items: center; gap: 2px; width: 42px; }
  .istat { display: flex; }
  .istat i { width: 12.500px; display: flex; justify-content: center; }
  .ieng { font-size: 6.200px; margin-left: 2px; }
  .itime { width: 41px; display: flex; flex-direction: column; align-items: center; font-size: 5.900px; line-height: 9px; padding-top: 1px; }
  .inote { margin-left: 4px; }

  .tiles { width: 188px; padding-top: 60px; display: flex; flex-direction: column; gap: 4px; }
  .tile { height: 104px; border-radius: 4px; border: 1px solid #383838; display: flex; align-items: center; justify-content: center; position: relative; flex: none; }
  .speaking { border: 2px solid #7f85f5; background: radial-gradient(circle at 80% 10%, #2b3329, transparent 55%), radial-gradient(circle at 80% 90%, #293037, transparent 60%), #252325; }
  .warm { background: radial-gradient(circle at 85% 20%, #2a3338, transparent 60%), radial-gradient(circle at 30% 100%, #3b2424, transparent 55%), #252323; }
  .amber { background: radial-gradient(circle at 85% 5%, #382a1e, transparent 60%), radial-gradient(circle at 5% 100%, #352024, transparent 50%), #252221; }
  .face { width: 53px; height: 52px; border-radius: 50%; display: flex; align-items: center; justify-content: center; font-size: 21px; font-weight: 600; }
  .sh { background: #d0ebdf; color: #18643c; }
  .si { background: #d6e4eb; color: #22505e; }
  .cs { background: #e5eddb; color: #45602a; }
  .who { position: absolute; left: 5px; bottom: 5px; height: 19px; display: flex; align-items: center; gap: 7px; padding: 0 5px; border-radius: 3px; background: #171314; color: #fff; font-size: 9px; }
  .speaking .who { left: 4px; bottom: 3px; }
  .presenter { position: absolute; left: 11px; top: 418px; width: 62px; height: 20px; border-radius: 3px; background: rgba(24, 24, 24, .66); display: flex; align-items: center; justify-content: center; font-size: 9px; color: #fff; }
  .zoom { position: absolute; left: 80px; top: 418px; width: 53px; height: 20px; border-radius: 3px; background: rgba(38, 38, 38, .66); display: flex; align-items: center; justify-content: space-around; color: #ccc; }

  footer { height: 25px; flex: none; background: #1b1b1b; display: flex; justify-content: space-between; color: #fff; }
  .slots { display: flex; margin-left: -1px; }
  .slot { width: 29.650px; display: flex; align-items: center; justify-content: center; position: relative; }
  .slot.run::after { left: 3px; right: 3px; height: 2px; }
  .slot.cur { background: #454545; }
  .slot.cur::after { left: 0; right: 0; }
  .tray { display: flex; align-items: center; font-size: 9.500px; }
  .tray span { display: flex; align-items: center; justify-content: center; }
  .tray > i { width: 1px; height: 25px; background: #777; margin-left: 8px; margin-right: 2px; }
</style>
